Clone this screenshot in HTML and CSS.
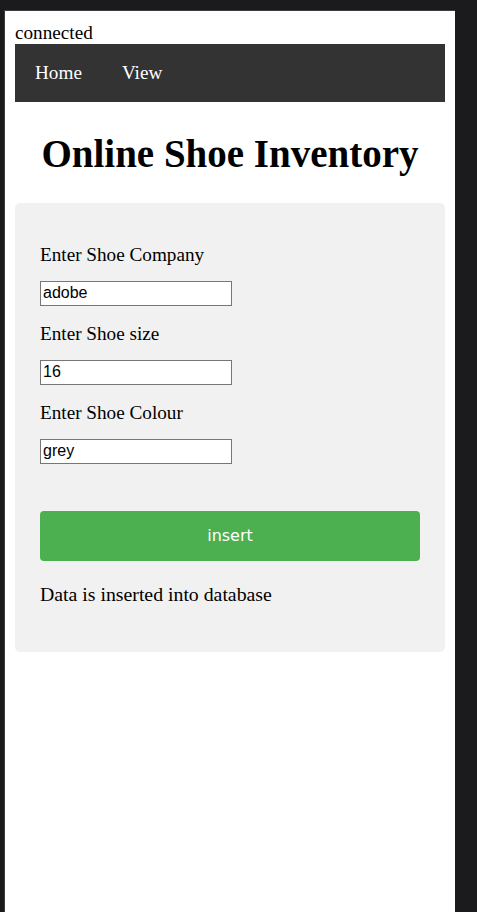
FILE: index.html
```html
<!DOCTYPE html>
<html>
<head>
<meta charset="utf-8">
<link rel="stylesheet" href="styles.css">
</head>
<body>
<div class="window">
  <div class="status">connected</div>
  <nav class="nav">
    <a class="nav-link" href="#">Home</a>
    <a class="nav-link" href="#">View</a>
  </nav>
  <h1 class="title">Online Shoe Inventory</h1>
  <form class="card">
    <label class="label">Enter Shoe Company</label>
    <input class="field" type="text" value="adobe">
    <label class="label">Enter Shoe size</label>
    <input class="field" type="text" value="16">
    <label class="label">Enter Shoe Colour</label>
    <input class="field" type="text" value="grey">
    <button class="btn" type="button">insert</button>
    <p class="msg">Data is inserted into database</p>
  </form>
</div>
</body>
</html>
```
FILE: styles.css
```css
html, body {
  margin: 0;
  padding: 0;
  background: #1b1b1d;
  height: 912px;
  overflow: hidden;
}
body {
  font-family: "Liberation Serif", "Times New Roman", serif;
  font-size: 19.2px;
  color: #000;
}
.window {
  box-sizing: border-box;
  margin: 10px 0 0 4px;
  width: 451px;
  height: 902px;
  background: #fff;
  border-top: 1px solid #3d3d3f;
  border-left: 1px solid #3d3d3f;
  padding: 10.5px 10px 0 10px;
}
.status {
  line-height: 22px;
}
.nav {
  display: flex;
  background: #333;
}
.nav-link {
  display: block;
  color: #fff;
  text-decoration: none;
  padding: 18px 20px;
  line-height: 22px;
}
.title {
  font-size: 39px;
  font-weight: bold;
  text-align: center;
  margin: 29px 0 27px;
  line-height: 45px;
}
.card {
  display: flex;
  flex-direction: column;
  align-items: flex-start;
  background: #f1f1f1;
  border-radius: 5px;
  padding: 24px 25px 25px;
}
.label {
  display: block;
  line-height: 22px;
  margin-top: 17px;
  margin-bottom: 15px;
}
.field {
  box-sizing: border-box;
  width: 192px;
  height: 25px;
  border: 1px solid #767676;
  padding: 1px 2px;
  margin: 0;
  font-family: "Liberation Sans", Arial, sans-serif;
  font-size: 16px;
  color: #000;
  background: #fff;
}
.btn {
  align-self: stretch;
  margin-top: 47px;
  height: 50px;
  border: none;
  border-radius: 4px;
  background: #4caf50;
  color: #fff;
  font-family: "DejaVu Sans", "Liberation Sans", sans-serif;
  font-size: 16px;
  padding: 0;
}
.msg {
  margin: 22px 0 21px;
  font-size: 19.8px;
  line-height: 23px;
}
```
